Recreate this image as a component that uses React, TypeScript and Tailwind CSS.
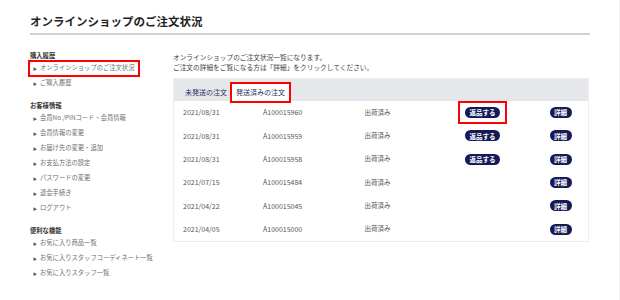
import React from "react";

const font = { fontFamily: '"Noto Sans CJK JP", "Noto Sans", sans-serif' };

function Item({ label, boxed }: { label: string; boxed?: boolean }) {
  return (
    <div className="h-[15px] flex items-center whitespace-nowrap">
      <div
        className={
          "flex items-center gap-[3px] pl-[3px] pr-[4px] h-[13px] " +
          (boxed ? "outline outline-2 outline-[#ff0000] outline-offset-0" : "")
        }
      >
        <span className="text-[4px] text-[#555] leading-none">▶</span>
        <span className="text-[6.3px] text-[#707070] leading-none">{label}</span>
      </div>
    </div>
  );
}

function Heading({ label }: { label: string }) {
  return <div className="h-[9px] text-[6.3px] font-bold text-[#333] leading-[8px]">{label}</div>;
}

function Pill({ label, boxed }: { label: string; boxed?: boolean }) {
  const pill = (
    <span className="inline-flex items-center justify-center h-[11px] px-[4.5px] rounded-full bg-[#131a57] text-white text-[6.5px] font-bold leading-none">
      {label}
    </span>
  );
  if (!boxed) return pill;
  return (
    <span className="inline-flex -m-[7px] py-[4px] px-[5px] border-2 border-[#ff0000]">{pill}</span>
  );
}

const rows = [
  ["2021/08/31", "A100015960", true],
  ["2021/08/31", "A100015959", true],
  ["2021/08/31", "A100015958", true],
  ["2021/07/15", "A100015484", false],
  ["2021/04/22", "A100015045", false],
  ["2021/04/05", "A100015000", false],
] as const;

export default function App() {
  return (
    <div className="w-[620px] h-[300px] bg-white border-r border-[#eeeeee] overflow-hidden" style={font}>
      <div className="pl-[30px] pt-[13px]">
        <div className="w-[560px] text-[11.5px] font-bold text-[#222] leading-[16px] pb-[4px] border-b-2 border-[#d0d0d5]">
          オンラインショップのご注文状況
        </div>
        <div className="flex mt-[17px]">
          <div className="w-[143px] shrink-0">
            <Heading label="購入履歴" />
            <Item label="オンラインショップのご注文状況" boxed />
            <Item label="ご購入履歴" />
            <div className="h-[11px]" />
            <Heading label="お客様情報" />
            <Item label="会員No./PINコード・会員情報" />
            <Item label="会員情報の変更" />
            <Item label="お届け先の変更・追加" />
            <Item label="お支払方法の設定" />
            <Item label="パスワードの変更" />
            <Item label="退会手続き" />
            <Item label="ログアウト" />
            <div className="h-[11px]" />
            <Heading label="便利な機能" />
            <Item label="お気に入り商品一覧" />
            <Item label="お気に入りスタッフコーディネート一覧" />
            <Item label="お気に入りスタッフ一覧" />
          </div>
          <div className="w-[416px]">
            <div className="text-[6.7px] text-[#444] leading-[10px] whitespace-nowrap">
              <div>オンラインショップのご注文状況一覧になります。</div>
              <div>ご注文の詳細をご覧になる方は「詳細」をクリックしてください。</div>
            </div>
            <div className="mt-[6px] border border-[#eeeeee] bg-white">
              <div className="h-[22px] bg-[#e6e7eb] flex items-end pl-[9px] gap-[3px]">
                <div className="h-[17px] px-[2px] flex items-center text-[7px] text-[#2a3060]">未発送の注文</div>
                <div className="h-[17px] px-[4px] bg-white flex items-center text-[7px] text-[#2a3060] outline outline-2 outline-[#ff0000] outline-offset-0">
                  発送済みの注文
                </div>
              </div>
              {rows.map(([d, n, r], i) => (
                <div key={i} className="h-[23.33px] flex items-center text-[7px] text-[#555]">
                  <div className="w-[89px] pl-[9px]">{d}</div>
                  <div className="w-[101.5px]">{n}</div>
                  <div className="w-[100.5px] text-[6.5px]">出荷済み</div>
                  <div className="w-[84.5px] flex">{r && <Pill label="返品する" boxed={i === 0} />}</div>
                  <div className="flex-1 flex">
                    <Pill label="詳細" />
                  </div>
                </div>
              ))}
            </div>
          </div>
        </div>
      </div>
    </div>
  );
}
